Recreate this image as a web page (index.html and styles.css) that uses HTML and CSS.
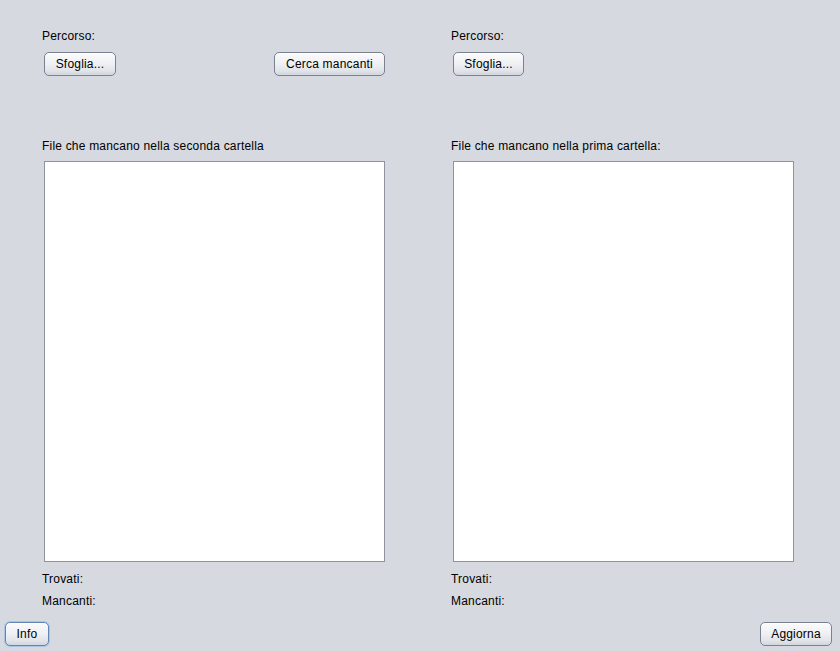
FILE: index.html
```html
<!DOCTYPE html>
<html>
<head>
<meta charset="utf-8">
<link rel="stylesheet" href="styles.css">
</head>
<body>
<div class="app">
  <div class="columns">
    <div class="col">
      <div class="label">Percorso:</div>
      <div class="btnrow">
        <button class="btn w-sfoglia">Sfoglia...</button>
        <button class="btn w-cerca">Cerca mancanti</button>
      </div>
      <div class="label list-label">File che mancano nella seconda cartella</div>
      <div class="list"></div>
      <div class="label stat first">Trovati:</div>
      <div class="label stat">Mancanti:</div>
    </div>
    <div class="col">
      <div class="label">Percorso:</div>
      <div class="btnrow">
        <button class="btn w-sfoglia2">Sfoglia...</button>
      </div>
      <div class="label list-label">File che mancano nella prima cartella:</div>
      <div class="list"></div>
      <div class="label stat first">Trovati:</div>
      <div class="label stat">Mancanti:</div>
    </div>
  </div>
  <div class="bottom">
    <button class="btn focused w-info">Info</button>
    <button class="btn w-aggiorna">Aggiorna</button>
  </div>
</div>
</body>
</html>
```
FILE: styles.css
```css
html, body {
  margin: 0;
  padding: 0;
  background: #d6d9df;
}
body {
  width: 840px;
  height: 651px;
  overflow: hidden;
  font-family: "Liberation Sans", Arial, sans-serif;
  font-size: 12px;
  letter-spacing: 0.2px;
  color: #000;
}
.app {
  display: flex;
  flex-direction: column;
}
.columns {
  display: grid;
  grid-template-columns: 343px 343px;
  column-gap: 66px;
  padding: 29px 0 0 42px;
}
.col {
  display: flex;
  flex-direction: column;
}
.label {
  line-height: 14px;
  height: 14px;
  white-space: nowrap;
}
.btnrow {
  display: flex;
  justify-content: space-between;
  margin-top: 9px;
  padding-left: 2px;
  height: 24px;
}
.btn {
  box-sizing: border-box;
  height: 24px;
  padding: 0;
  margin: 0;
  font-family: "Liberation Sans", Arial, sans-serif;
  font-size: 12px;
  letter-spacing: 0.2px;
  color: #000;
  border: 1px solid #7a8190;
  border-radius: 5px;
  background: linear-gradient(to bottom, #fbfbfc 0%, #f0f1f4 45%, #e1e4e9 80%, #d2d6dd 100%);
  box-shadow: inset 0 1px 0 #ffffff;
  text-align: center;
  line-height: 20px;
}
.w-sfoglia { width: 72px; }
.w-sfoglia2 { width: 71px; }
.w-cerca { width: 111px; }
.w-info { width: 44px; }
.w-aggiorna { width: 72px; }
.list-label {
  margin-top: 63px;
}
.list {
  box-sizing: border-box;
  margin: 8px 0 0 2px;
  width: 341px;
  height: 401px;
  background: #fff;
  border: 1px solid #8e949f;
}
.stat.first {
  margin-top: 10px;
}
.stat {
  margin-top: 8px;
}
.bottom {
  display: flex;
  justify-content: space-between;
  align-items: flex-start;
  margin-top: 14px;
  padding: 0 8px 0 5px;
}
.btn.focused {
  border-color: #5f86b4;
  box-shadow: 0 0 0 1px #a9c6e6, inset 0 1px 0 #ffffff;
}
```
